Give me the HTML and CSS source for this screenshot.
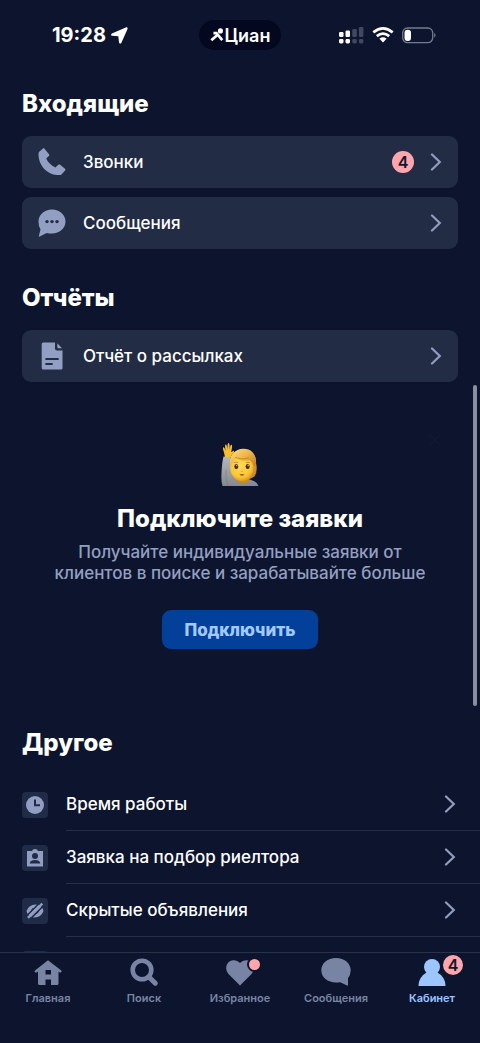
FILE: index.html
```html
<!DOCTYPE html>
<html lang="ru">
<head>
<meta charset="utf-8">
<meta name="viewport" content="width=device-width, initial-scale=1">
<title>Циан — Кабинет</title>
<link rel="stylesheet" href="styles.css">
</head>
<body>
<svg class="defs" aria-hidden="true">
  <symbol id="chevron" viewBox="0 0 12 18"><path d="M2 1.500 9.800 9 2 16.500" fill="none" stroke="currentColor" stroke-width="2.200" stroke-linecap="round" stroke-linejoin="miter"/></symbol>
</svg>

<header class="status">
  <div class="status-time">
    <span>19:28</span>
    <svg width="17" height="17" viewBox="0 0 17 17" fill="currentColor"><path d="M14.800.5.9 6.500C-.2 7-.1 8.700 1.200 8.800L7.300 9.300 8 15.300C8.200 16.700 9.800 17 10.400 15.700L16.400 2.200C17 .8 16 0 14.800.5Z"/></svg>
  </div>
  <div class="brand">
    <svg width="14" height="15" viewBox="0 0 13 14"><circle cx="9.700" cy="2.700" r="2.400" fill="currentColor"/><path d="M1.200 11.500 7.200 6.200 11.400 11.300M3.200 4.800H6L7.800 7" fill="none" stroke="currentColor" stroke-width="2.500"/></svg>
    <span>Циан</span>
  </div>
  <div class="status-icons">
    <svg width="25" height="17" viewBox="0 0 25 17" fill="#fff"><rect x="0" y="5" width="4.500" height="5" rx="1.200"/><rect x="6.500" y="3.500" width="4.500" height="6.500" rx="1.200"/><rect x="0" y="12" width="4.500" height="4.500" rx="1.400"/><rect x="6.500" y="12" width="4.500" height="4.500" rx="1.400"/><g fill="#414962"><rect x="13.300" y="2" width="4.500" height="8" rx="1.200"/><rect x="19.900" y="0" width="4.500" height="10" rx="1.200"/><rect x="13.300" y="12" width="4.500" height="4.500" rx="1.400"/><rect x="19.900" y="12" width="4.500" height="4.500" rx="1.400"/></g></svg>
    <svg width="22" height="16" viewBox="0 0 22 16" fill="none" stroke="#fff" stroke-width="2.700"><path d="M1.300 5.400Q11-2.600 20.700 5.400M4.800 9.100Q11 4 17.200 9.100"/><path d="M7.400 11.700Q11 8.800 14.600 11.700L11 15.600Z" fill="#fff" stroke="none"/></svg>
    <svg width="34" height="17" viewBox="0 0 34 17"><rect x=".7" y="1" width="30" height="14.600" rx="4.800" fill="none" stroke="#737b90" stroke-width="1.300"/><rect x="2.500" y="2.700" width="6.500" height="11.200" rx="3" fill="#fff"/><path d="M32.200 5.800Q34.800 8.300 32.200 10.800Z" fill="#737b90"/></svg>
  </div>
</header>

<main class="content">
  <section class="section">
    <h2>Входящие</h2>
    <div class="cards">
      <a class="card" href="#calls">
        <svg class="card-icon" viewBox="0 0 28 28" fill="currentColor"><path d="M1.200 3.800 4.700.7C5.300.2 6 .2 6.500.8L11 6.200C11.500 6.800 11.400 7.500 10.900 8L8.200 10.600C9.800 14.200 13 17.700 17.400 19.400L20.300 16.800C20.900 16.300 21.600 16.300 22.200 16.800L27 20.800C27.600 21.300 27.600 22 27.100 22.600L23.700 26.300C23.200 26.900 22.600 27.100 21.800 27.100C9.500 27.500.5 18 .5 5.700Q.5 4.500 1.200 3.800Z"/></svg>
        <span class="label">Звонки</span><span class="badge">4</span><svg class="chevron"><use href="#chevron"/></svg>
      </a>
      <a class="card" href="#messages">
        <svg class="card-icon" viewBox="0 0 28 28" fill="currentColor"><path d="M14 .5C21.500.5 27.500 5.700 27.500 12.500S21.500 24.500 14 24.500Q11 24.500 8.800 23.900L1.600 27.500Q.5 28 .9 26.800L2.500 20.500Q.5 17.500.5 12.500C.5 5.700 6.500.5 14 .5Z"/><g fill="#222c45"><circle cx="9" cy="12.600" r="1.700"/><circle cx="14" cy="12.600" r="1.700"/><circle cx="19" cy="12.600" r="1.700"/></g></svg>
        <span class="label">Сообщения</span><svg class="chevron"><use href="#chevron"/></svg>
      </a>
    </div>
  </section>

  <section class="section">
    <h2>Отчёты</h2>
    <div class="cards">
      <a class="card" href="#report">
        <svg class="card-icon" viewBox="0 0 28 28"><path d="M5.200.5H17V6.500Q17 8.400 18.900 8.400H24.500V26Q24.500 27.500 23 27.500H5.200Q3.700 27.500 3.700 26V2Q3.700.5 5.200.5Z" fill="currentColor"/><path d="M19.300 1.200 24 6.300H20.500Q19.300 6.300 19.300 5.100Z" fill="currentColor"/><path d="M8.100 17H20M8.100 22H14" stroke="#222c45" stroke-width="1.800" stroke-linecap="round"/></svg>
        <span class="label">Отчёт о рассылках</span><svg class="chevron"><use href="#chevron"/></svg>
      </a>
    </div>
  </section>

  <section class="promo">
    <button class="close" type="button" aria-label="Закрыть"><svg width="14" height="14" viewBox="0 0 14 14"><path d="M1 1 13 13M13 1 1 13" stroke="currentColor" stroke-width="2"/></svg></button>
    <svg class="emoji" width="40" height="46" viewBox="0 0 40 46" aria-hidden="true">
      <defs>
        <linearGradient id="sleeve" x1="0" y1="0" x2="0" y2="1"><stop offset="0" stop-color="#b4b8bd"/><stop offset="1" stop-color="#85898f"/></linearGradient>
        <radialGradient id="face" cx=".45" cy=".4" r=".65"><stop offset="0" stop-color="#ffdc58"/><stop offset=".7" stop-color="#fbc536"/><stop offset="1" stop-color="#d98e1b"/></radialGradient>
        <linearGradient id="hair" x1="0" y1="0" x2="1" y2="1"><stop offset="0" stop-color="#ffe187"/><stop offset=".5" stop-color="#ecb344"/><stop offset="1" stop-color="#b97820"/></linearGradient>
      </defs>
      <path d="M3.500 14.500 10.500 15Q10.300 22 14 28Q17 33 22 35L31 38Q37 39.500 38.500 44H2.500Q1 40 1.500 31Q1.900 21 3.500 14.500Z" fill="url(#sleeve)"/>
      <path d="M6 28Q5 37 8 44" fill="none" stroke="#74787e" stroke-width="1" opacity=".5"/>
      <path d="M5 15Q4.200 10.500 3.200 8Q2.500 5.500 3.400 5.200Q4.500 5 5.600 9Q4.500 2.700 5.700 2.400Q7 2.200 7.500 8Q7.200 1 8.500 1Q10 1 9.500 8Q10.300 2.300 11.600 2.700Q12.700 3 11.300 9.500Q11.300 10.500 12 9.800Q13.300 8.200 14 9Q14.500 10 12 12.500L10.700 15.300Z" fill="#f8be32"/>
      <path d="M15 34H29V39.500Q21 43.500 15 37Z" fill="#d48a1a"/>
      <path d="M10.400 22C9.400 14 15 7 23 6.800C31 6.500 36.500 12 36 21Q38 29 34.500 34.500L28 38Z" fill="url(#hair)"/>
      <ellipse cx="21.900" cy="26" rx="11.700" ry="13" fill="url(#face)"/>
      <path d="M10.200 23C8.500 13 15 7.200 23 7.200C31 7 37 13 35.700 22L34 25Q33 20 29 18.300Q19 19.500 15 15.500Q14.500 21 10.200 23Z" fill="url(#hair)"/>
      <path d="M15 15.500Q21 18 29 16" fill="none" stroke="#bc7b22" stroke-width=".7"/>
      <ellipse cx="16.300" cy="24.500" rx="2" ry="2.500" fill="#482b10"/><ellipse cx="27.600" cy="24.500" rx="2" ry="2.500" fill="#482b10"/><circle cx="16.800" cy="23.700" r=".6" fill="#fff"/><circle cx="28.100" cy="23.700" r=".6" fill="#fff"/>
      <path d="M14 20.700Q16.300 19.700 18.200 20.700M26 20.700Q28 19.700 30 20.700" fill="none" stroke="#b8801f" stroke-width=".8"/>
      <path d="M20.800 29.200Q22 29.800 23.200 29.200" fill="none" stroke="#d99a26" stroke-width=".7"/>
      <path d="M19.300 32.400Q22 31.800 24.700 32.400Q22 35.200 19.300 32.400Z" fill="#a9502c"/>
    </svg>
    <h2>Подключите заявки</h2>
    <p>Получайте индивидуальные заявки от клиентов в поиске и зарабатывайте больше</p>
    <button class="primary" type="button">Подключить</button>
  </section>

  <section class="section">
    <h2>Другое</h2>
    <div class="list">
      <a class="item" href="#hours">
        <span class="tile"><svg viewBox="0 0 18 18"><circle cx="9" cy="9" r="9" fill="currentColor"/><path d="M9 3.500V9.300H14" fill="none" stroke="#1f2b47" stroke-width="2"/></svg></span>
        <span class="item-body"><span class="label">Время работы</span><svg class="chevron"><use href="#chevron"/></svg></span>
      </a>
      <a class="item" href="#realtor">
        <span class="tile"><svg viewBox="0 0 18 18"><path d="M1 2H6Q6.500 0 9 0T12 2H17V17.500H1Z" fill="currentColor"/><circle cx="9" cy="7" r="3" fill="#1f2b47"/><path d="M3.700 14.500Q4 11 9 11T14.300 14.500Z" fill="#1f2b47"/></svg></span>
        <span class="item-body"><span class="label">Заявка на подбор риелтора</span><svg class="chevron"><use href="#chevron"/></svg></span>
      </a>
      <a class="item" href="#hidden">
        <span class="tile"><svg viewBox="0 0 18 18"><path d="M.5 9Q3 2.500 9.500 2.500Q13 2.500 15 4.500Q17 6.500 17.500 9Q15 15.500 8.500 15.500Q4.500 15.500 2.500 13Q1 11.500.5 9Z" fill="currentColor"/><path d="M12.300 2.300 1.300 13.300M17.600 3.600 5.600 15.600" stroke="#1f2b47" stroke-width="1.500"/><path d="M16.300 1.600 2 15.900" stroke="currentColor" stroke-width="2.400"/><path d="M7 6.300Q5 7.500 5.300 9.600M12.700 8.500Q12.500 11 9.500 12" fill="none" stroke="#1f2b47" stroke-width="1"/></svg></span>
        <span class="item-body"><span class="label">Скрытые объявления</span><svg class="chevron"><use href="#chevron"/></svg></span>
      </a>
      <div class="item"><span class="tile"></span><span class="item-body"></span></div>
    </div>
  </section>
</main>
<div class="scrollbar"></div>

<nav class="tabs">
  <a class="tab" href="#home"><span class="tab-icon"><svg viewBox="0 0 30 30" fill="currentColor" fill-rule="evenodd"><path d="M15 2.200 28.300 12.500Q29 13.300 28.100 14.200Q27.300 15 26.300 14.200L25.500 13.600V25.500Q25.500 27 24 27H18V21.500H12.500V27H6.500Q5 27 5 25.500V13.600L4 14.300Q2.900 15 2 14.200Q1.200 13.300 2 12.500ZM12.500 12V16.500H18V12Z"/></svg></span><span>Главная</span></a>
  <a class="tab" href="#search"><span class="tab-icon"><svg viewBox="0 0 30 30" fill="none" stroke="currentColor"><circle cx="13" cy="12" r="9.300" stroke-width="4.600"/><path d="M20 19 26.300 25.200" stroke-width="5" stroke-linecap="round"/></svg></span><span>Поиск</span></a>
  <a class="tab" href="#favorites"><span class="tab-icon"><svg viewBox="0 0 30 30"><path d="M15 27.500 3.500 16C-1 11 1.300 2.700 8.500 2.200Q12.500 2 15 5Q17.500 2 21.500 2.200C28.700 2.700 31 11 26.500 16Z" fill="currentColor"/></svg><span class="dot"></span></span><span>Избранное</span></a>
  <a class="tab" href="#chat"><span class="tab-icon"><svg viewBox="0 0 30 30" fill="currentColor"><path d="M15 0C23.300 0 29.700 5.300 29.700 12.300Q29.700 17 27 20V27Q27 28 26 27.500L19.300 24.200Q17.500 24.600 15 24.600C6.700 24.600.3 19.300.3 12.300S6.700 0 15 0Z"/></svg></span><span>Сообщения</span></a>
  <a class="tab active" href="#cabinet"><span class="tab-icon"><svg viewBox="0 0 30 30" fill="currentColor"><circle cx="15" cy="9" r="8"/><path d="M1.500 28Q1.500 19 9.500 14.500H20.500Q28.500 19 28.500 28Z"/></svg><span class="badge tab-badge">4</span></span><span>Кабинет</span></a>
</nav>
</body>
</html>
```
FILE: styles.css
```css
* { box-sizing: border-box; }

body {
  margin: 0;
  height: 100vh;
  display: flex;
  flex-direction: column;
  position: relative;
  overflow: hidden;
  background: #0d152e;
  color: #fff;
  font-family: Inter, "Noto Sans", sans-serif;
}

a { color: inherit; text-decoration: none; }
button { font: inherit; border: 0; cursor: pointer; }
svg { display: block; flex: none; }
h2, p { margin: 0; }
h2 { font-size: 24px; line-height: 30px; font-weight: 800; }

.defs { position: absolute; width: 0; height: 0; }

.status {
  flex: none;
  display: grid;
  grid-template-columns: 1fr auto 1fr;
  align-items: center;
  height: 70px;
  padding: 0 44px;
}
.status-time { display: flex; align-items: center; gap: 5px; padding-left: 8px; font-size: 20px; font-weight: 700; }
.brand {
  display: flex;
  align-items: center;
  justify-content: center;
  gap: 1px;
  width: 82px;
  height: 30px;
  border-radius: 15px;
  background: #030820;
  font-size: 18px;
  font-weight: 600;
}
.status-icons { display: flex; align-items: center; justify-content: flex-end; gap: 8px; }

.content { flex: 1; min-height: 0; overflow: hidden; padding-top: 19px; }
.section { padding: 0 22px; }
.section + .section { padding-top: 34px; }

.cards { display: flex; flex-direction: column; gap: 9px; margin-top: 17px; }
.card {
  display: flex;
  align-items: center;
  height: 52px;
  padding: 0 16px;
  border-radius: 9px;
  background: #222c45;
}
.card-icon { width: 28px; height: 28px; margin-right: 17px; color: #939fc2; }
.label { flex: 1; font-size: 17px; line-height: 22px; font-weight: 500; }
.chevron { width: 12px; height: 18px; color: #929dbd; }
.badge {
  display: flex;
  align-items: center;
  justify-content: center;
  width: 22px;
  height: 22px;
  margin-right: 16px;
  border-radius: 50%;
  background: #ffa5ad;
  color: #10182f;
  font-size: 16px;
  font-weight: 600;
}

.promo {
  position: relative;
  display: flex;
  flex-direction: column;
  align-items: center;
  padding: 60px 40px 79px;
  text-align: center;
}
.close {
  position: absolute;
  top: 51px;
  right: 38px;
  padding: 0;
  background: none;
  color: #111931;
}
.promo h2 { margin-top: 16px; }
.promo p { max-width: 380px; margin-top: 8px; color: #949fc0; font-size: 17px; line-height: 21px; font-weight: 500; }
.primary {
  height: 39px;
  margin-top: 26px;
  padding: 0 22px;
  border-radius: 9px;
  background: #03409a;
  color: #a3caff;
  font-size: 17px;
  font-weight: 800;
}

.list { margin-top: 20px; margin-right: -22px; }
.item { display: flex; align-items: center; gap: 18px; height: 53px; }
.tile {
  display: grid;
  place-items: center;
  width: 26px;
  height: 26px;
  border-radius: 4px;
  background: #1f2b47;
  color: #929ec1;
}
.tile svg { width: 18px; height: 18px; }
.item-body {
  flex: 1;
  display: flex;
  align-items: center;
  height: 53px;
  padding-right: 24px;
  border-bottom: 1px solid #252e46;
}

.scrollbar {
  position: absolute;
  top: 385px;
  right: 3px;
  width: 4px;
  height: 321px;
  border-radius: 2px;
  background: #8a90a1;
}

.tabs {
  flex: none;
  display: grid;
  grid-template-columns: repeat(5, 1fr);
  height: 91px;
  padding-top: 5px;
  border-top: 1px solid #293249;
}
.tab {
  display: flex;
  flex-direction: column;
  align-items: center;
  gap: 2px;
  color: #7984a4;
  font-size: 11px;
  line-height: 16px;
  font-weight: 600;
}
.tab.active { color: #9dc5ff; }
.tab-icon { position: relative; width: 30px; height: 30px; }
.tab-icon svg { width: 30px; height: 30px; }
.dot {
  position: absolute;
  top: -1px;
  right: -7px;
  width: 15px;
  height: 15px;
  border: 2px solid #0d152e;
  border-radius: 50%;
  background: #ffa5ad;
}
.tab-badge { position: absolute; top: -3px; right: -16px; width: 20px; height: 20px; margin: 0; }
```
